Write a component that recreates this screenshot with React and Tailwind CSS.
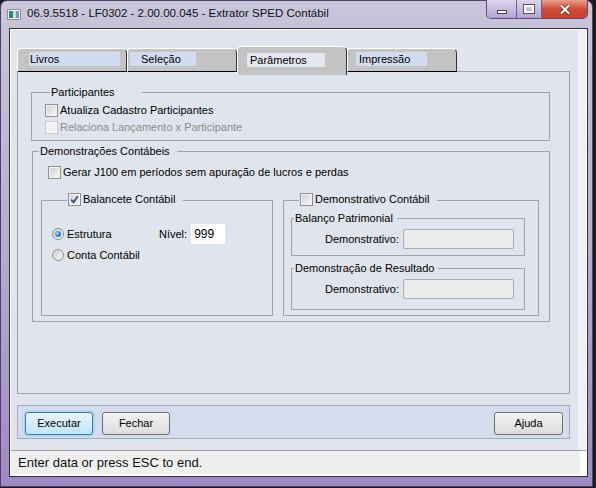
import clsx from 'clsx'

const tabs = [
  { label: 'Livros', box: 'ml-[11px] w-[91px] pl-px' },
  { label: 'Seleção', box: 'ml-[2px] w-[66px] pl-[11px]' },
  { label: 'Parâmetros', box: 'ml-[9px] w-[78px] pl-[3px]', active: true },
  { label: 'Impressão', box: 'ml-[8px] w-[71px] pl-[3px]' },
]

function Check({ checked, disabled }) {
  return (
    <span className={clsx('inline-flex w-[13px] h-[13px] shrink-0 border p-px',
      disabled ? 'border-[#c9c9c9] bg-[#f7f7f7]' : 'border-[#8e8f8f] bg-[#f4f4f4]')}>
      <span className={clsx('flex w-full h-full items-center justify-center',
        disabled ? 'bg-[#f2f2f2]' : 'bg-linear-to-br from-[#d3d3d3] to-[#f6f6f6]')}>
        {checked && (
          <svg width="9" height="9" viewBox="0 0 9 9">
            <path d="M1.2 4.6 L3.6 7.3 L7.8 1.2" fill="none" stroke="#2a4d8c" strokeWidth="1.7" />
          </svg>
        )}
      </span>
    </span>
  )
}

function Radio({ on }) {
  return (
    <span className="inline-flex w-[12px] h-[12px] shrink-0 items-center justify-center rounded-full border border-[#8e8f8f] bg-linear-to-br from-[#cfcfcf] to-[#f8f8f8]">
      {on && <span className="w-[6px] h-[6px] rounded-full bg-[radial-gradient(circle_at_35%_35%,#a8dcff,#1b74c4_60%,#0c4786)]" />}
    </span>
  )
}

function Btn({ primary, className, children }) {
  return (
    <button type="button"
      className={clsx('h-[23px] rounded-[3px] border text-[11px] text-black', className,
        primary
          ? 'border-[#3d7bad] bg-linear-to-b from-[#eaf6fd] to-[#c0e5f8] shadow-[0_0_2px_1px_#8fd4f8]'
          : 'border-[#707070] bg-linear-to-b from-[#f3f3f3] to-[#dcdcdc]')}>
      {children}
    </button>
  )
}

export default function App() {
  return (
    <div className="w-[596px] h-[488px] bg-[#1c1c22] font-['Liberation_Sans',Arial,sans-serif] text-black">
      <div className="w-[593px] h-[487px] rounded-t-[7px] border border-[#4d3f66] bg-linear-to-b from-[#c8c6da] via-[#b8acd2] to-[#9e89c4] flex flex-col">

        {/* title bar */}
        <div className="h-[27px] flex items-start">
          <div className="flex items-center h-[26px] pl-[6px] gap-[6px]">
            <svg width="14" height="11" viewBox="0 0 14 11">
              <rect x="0.5" y="0.5" width="13" height="10" fill="#f2f2f4" stroke="#8b8b9c" />
              <rect x="2" y="2" width="4" height="7" fill="#2c8a6c" />
              <rect x="6" y="2" width="3" height="7" fill="#bfe0d4" />
              <rect x="9" y="2" width="3" height="7" fill="#7894c2" />
            </svg>
            <span className="text-[11.5px] text-[#111]">06.9.5518 - LF0302 - 2.00.00.045 - Extrator SPED Contábil</span>
          </div>
          <div className="ml-auto mr-[4px] -mt-px flex h-[19px] rounded-b-[5px] border border-t-0 border-[#5b4b78] overflow-hidden">
            <div className="w-[30px] flex items-end justify-center pb-[4px] bg-linear-to-b from-[#ddd6ec] to-[#b3a3d3] border-r border-[#6d5e8c]">
              <span className="w-[10px] h-[4px] bg-white border border-[#444]" />
            </div>
            <div className="w-[25px] flex items-center justify-center bg-linear-to-b from-[#ddd6ec] to-[#b3a3d3] border-r border-[#6d5e8c]">
              <span className="w-[10px] h-[8px] border-2 border-white outline outline-[#555]" />
            </div>
            <div className="w-[45px] flex items-center justify-center bg-linear-to-b from-[#e8a08e] via-[#cf4b36] to-[#c8412e]">
              <svg width="12" height="11" viewBox="0 0 12 11">
                <path d="M2 1.5 L10 9.5 M10 1.5 L2 9.5" stroke="#5a1a12" strokeWidth="3.4" />
                <path d="M2 1.5 L10 9.5 M10 1.5 L2 9.5" stroke="#fff" strokeWidth="2.2" />
              </svg>
            </div>
          </div>
        </div>

        {/* client */}
        <div className="ml-[8px] mr-[4px] w-[579px] h-[449px] border border-[#2f2f3d] pt-px px-px pb-[2px] bg-white flex flex-col">
          <div className="flex h-[420px]">
            <div className="w-[567px] bg-[#e0e4ec] pt-[16px] pl-[6px] flex flex-col">

              {/* tabs */}
              <div className="relative z-10 flex items-end h-[26px]">
                {tabs.map(t => (
                  <div key={t.label}
                    className={clsx('w-[110px] rounded-tl-[3px] rounded-tr-[5px] border-l border-t border-r border-l-white border-t-white border-r-[#333] bg-[#c3c3c3]',
                      t.active ? 'h-[29px] -mb-[3px] pt-[6px]' : 'h-[24px] border-b border-b-black pt-[3px]')}>
                    <div className={clsx('h-[14px] flex items-center text-[11px]', t.box,
                      t.active ? 'bg-[#e2e6ee]' : 'bg-[#d3dbf0]')}>{t.label}</div>
                  </div>
                ))}
              </div>

              {/* panel */}
              <div className="-mt-px w-[553px] h-[323px] border border-[#9ea2aa] text-[11px]">
                <fieldset className="mt-[14px] ml-[13px] w-[519px] border border-[#a0a4ac] pt-[3px] pb-[4px] pl-[13px]">
                  <legend className="ml-[5px] pl-px pr-[27px] leading-[13px]">Participantes</legend>
                  <div className="h-[17px] flex items-center gap-[2px]">
                    <Check />
                    <span>Atualiza Cadastro Participantes</span>
                  </div>
                  <div className="h-[17px] flex items-center gap-[2px] text-[#8d8d8d]">
                    <Check disabled />
                    <span>Relaciona Lançamento x Participante</span>
                  </div>
                </fieldset>

                <fieldset className="mt-[4px] ml-[14px] w-[518px] border border-[#a0a4ac] pt-[6px] pb-[5px]">
                  <legend className="ml-[6px] pl-px pr-[7px] leading-[13px]">Demonstrações Contábeis</legend>
                  <div className="h-[17px] pl-[15px] flex items-center gap-[2px]">
                    <Check />
                    <span>Gerar J100 em períodos sem apuração de lucros e perdas</span>
                  </div>

                  <div className="mt-[12px] ml-[8px] flex items-stretch gap-[10px]">
                    <fieldset className="w-[232px] border border-[#a0a4ac] pl-[10px] pt-[17px]">
                      <legend className="ml-[15px] pl-px pr-[8px] leading-[13px]">
                        <span className="inline-flex items-center gap-[2px]"><Check checked /><span>Balancete Contábil</span></span>
                      </legend>
                      <div className="h-[20px] flex items-center">
                        <div className="w-[107px] flex items-center gap-[3px]">
                          <Radio on />
                          <span>Estrutura</span>
                        </div>
                        <span>Nível:</span>
                        <div className="ml-[4px] w-[34px] h-[20px] bg-white pl-[3px] flex items-center text-[12px]">999</div>
                      </div>
                      <div className="h-[22px] flex items-center gap-[3px]">
                        <Radio />
                        <span>Conta Contábil</span>
                      </div>
                    </fieldset>

                    <fieldset className="w-[256px] border border-[#a0a4ac] pb-[5px]">
                      <legend className="ml-[15px] pl-px pr-[8px] leading-[13px]">
                        <span className="inline-flex items-center gap-[2px]"><Check /><span>Demonstrativo Contábil</span></span>
                      </legend>
                      <fieldset className="mt-[5px] ml-[7px] w-[234px] border border-[#a0a4ac] pt-[4px] pb-[6px] pr-[10px]">
                        <legend className="ml-[2px] pl-px pr-[4px] leading-[13px]">Balanço Patrimonial</legend>
                        <div className="h-[20px] flex items-center justify-end gap-[4px]">
                          <span>Demonstrativo:</span>
                          <div className="w-[111px] h-[20px] rounded-[2px] border border-[#abadb3] bg-[#ebebeb]" />
                        </div>
                      </fieldset>
                      <fieldset className="mt-[6px] ml-[7px] w-[234px] border border-[#a0a4ac] pt-[4px] pb-[10px] pr-[10px]">
                        <legend className="ml-[2px] pl-px pr-[4px] leading-[13px]">Demonstração de Resultado</legend>
                        <div className="h-[20px] flex items-center justify-end gap-[4px]">
                          <span>Demonstrativo:</span>
                          <div className="w-[111px] h-[20px] rounded-[2px] border border-[#abadb3] bg-[#ebebeb]" />
                        </div>
                      </fieldset>
                    </fieldset>
                  </div>
                </fieldset>
              </div>

              {/* buttons */}
              <div className="mt-[11px] w-[553px] h-[34px] border border-[#a3abba] bg-[#d4dcee] flex items-start pt-[6px] pl-[7px] pr-[6px]">
                <Btn primary className="w-[68px]">Executar</Btn>
                <Btn className="ml-[9px] w-[68px]">Fechar</Btn>
                <Btn className="ml-auto w-[69px]">Ajuda</Btn>
              </div>
            </div>
            <div className="flex-1 bg-[#eef0f3]" />
          </div>

          {/* status */}
          <div className="flex border-t border-[#a0a0a0]">
            <div className="w-[569px] h-[23px] bg-[#f0efef] pl-[7px] flex items-center text-[13px] text-[#111]">
              Enter data or press ESC to end.
            </div>
            <div className="flex-1 bg-white" />
          </div>
        </div>
      </div>
    </div>
  )
}
